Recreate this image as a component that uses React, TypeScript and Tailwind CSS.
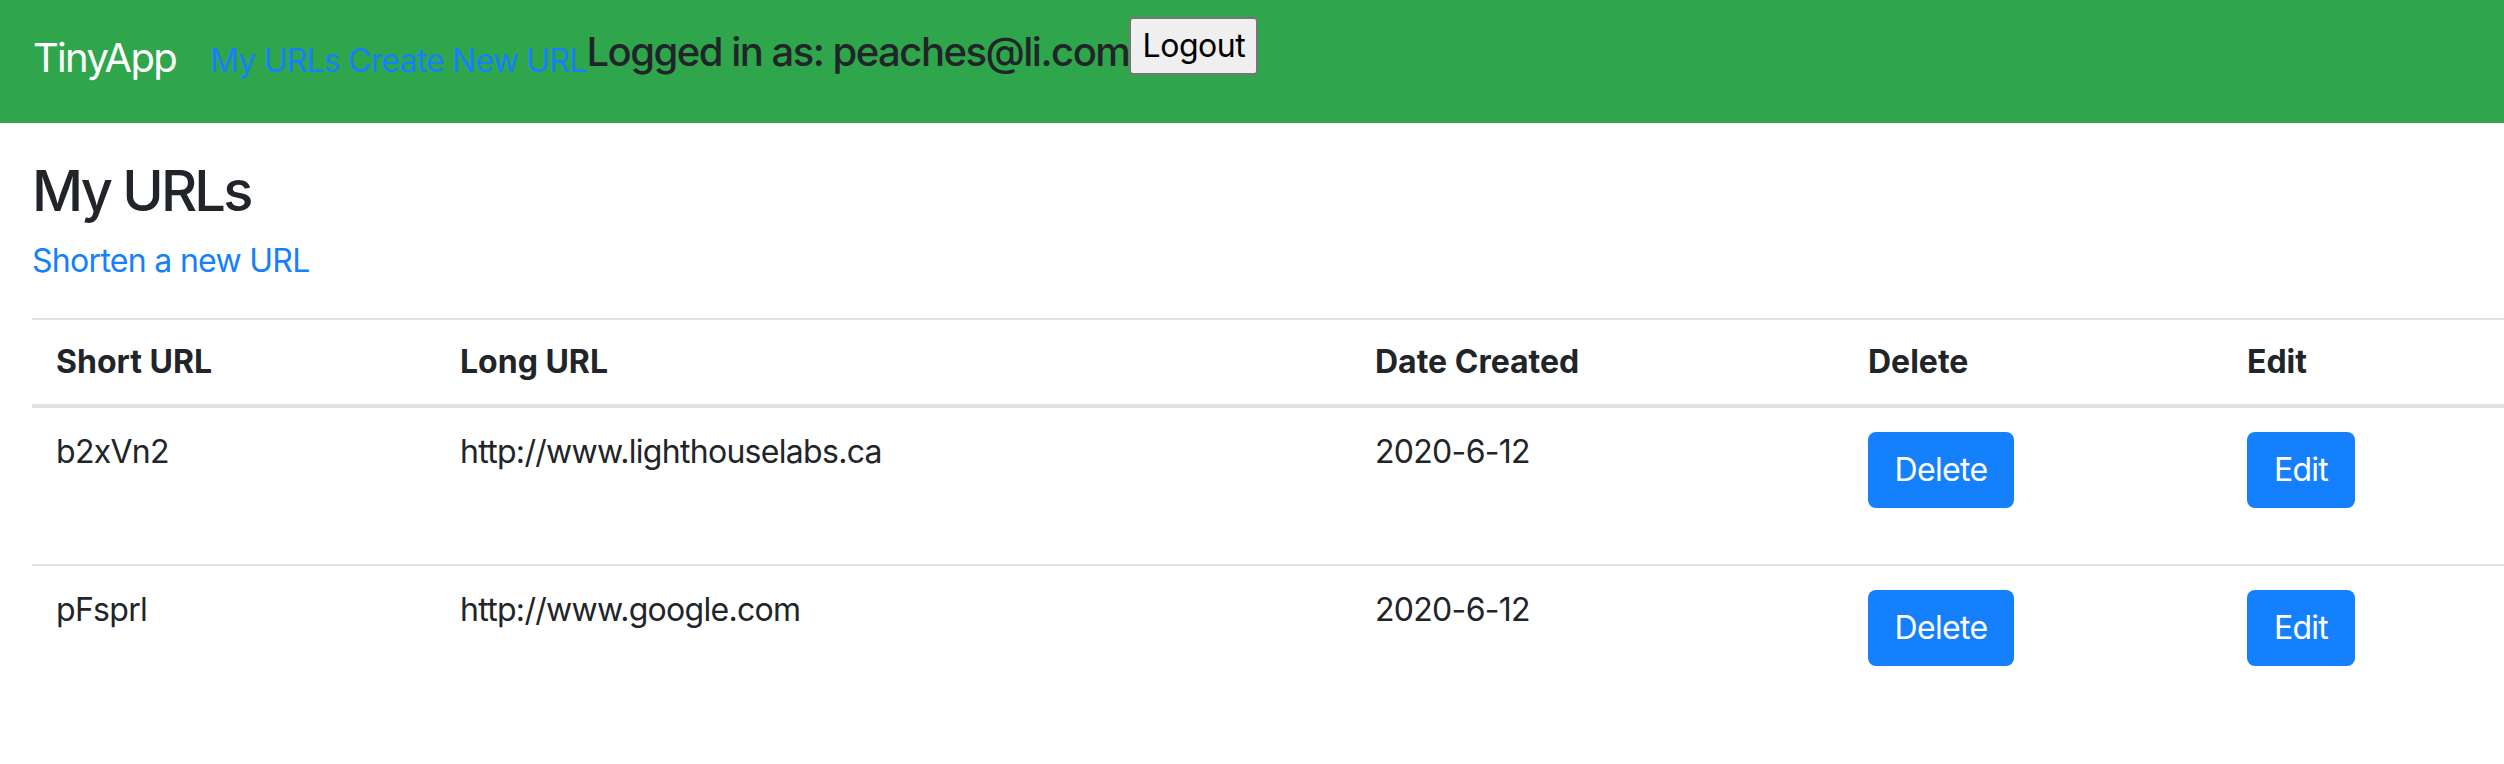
const urls = [
  { short: 'b2xVn2', long: 'http://www.lighthouselabs.ca', date: '2020-6-12' },
  { short: 'pFsprl', long: 'http://www.google.com', date: '2020-6-12' },
]

const Navbar = () => {
  return (
    <nav className="flex h-[123px] items-start bg-[#2fa64c] pl-[33px] whitespace-nowrap">
      <a href="/urls" className="mt-[28px] text-[40px] leading-[60px] tracking-[-1.7px] text-white">
        TinyApp
      </a>
      <div className="ml-[34px] mt-[37px] text-[32px] leading-[48px] tracking-[-0.8px] text-[#1580fb]">
        <a href="/urls">My URLs</a> <a href="/urls/new">Create New URL</a>
      </div>
      <h5 className="mt-[28px] text-[40px] font-medium leading-[48px] tracking-[-1.5px] text-[#212529]">
        Logged in as: peaches@li.com
      </h5>
      <form className="mt-[17px]" onSubmit={(e) => e.preventDefault()}>
        <button
          type="submit"
          className="flex h-[58px] w-[129px] items-center justify-center rounded-[4px] border-2 border-[#767676] bg-[#efefef] text-[32px] leading-[48px] tracking-[-0.5px] text-black"
        >
          Logout
        </button>
      </form>
    </nav>
  )
}

const App = () => {
  return (
    <div className="min-h-screen bg-white font-['Inter','Liberation_Sans',sans-serif] text-[#212529]">
      <Navbar />
      <main className="pl-[32px]">
        <h3 className="mt-[35px] text-[56px] font-medium leading-[67px] tracking-[-2.8px]">My URLs</h3>
        <div className="mt-[12px] text-[32px] leading-[48px] tracking-[-0.7px]">
          <a href="/urls/new" className="text-[#1580fb]">
            Shorten a new URL
          </a>
        </div>

        <table className="mt-[33px] w-[2472px] table-fixed border-separate border-spacing-0 text-left text-[32px] leading-[48px]">
          <colgroup>
            <col className="w-[404px]" />
            <col className="w-[915px]" />
            <col className="w-[493px]" />
            <col className="w-[379px]" />
            <col className="w-[281px]" />
          </colgroup>
          <thead>
            <tr>
              {['Short URL', 'Long URL', 'Date Created', 'Delete', 'Edit'].map((h) => (
                <th
                  key={h}
                  className="border-t-2 border-b-4 border-[#dee2e6] px-[24px] py-[18px] align-top font-bold"
                >
                  {h}
                </th>
              ))}
            </tr>
          </thead>
          <tbody className="tracking-[-0.7px]">
            {urls.map((url, i) => {
              const border = i > 0 ? 'border-t-2 border-[#dee2e6]' : ''
              return (
                <tr key={url.short}>
                  <td className={`${border} px-[24px] pt-[20px] align-top`}>{url.short}</td>
                  <td className={`${border} px-[24px] pt-[20px] align-top`}>{url.long}</td>
                  <td className={`${border} px-[24px] pt-[20px] align-top`}>{url.date}</td>
                  <td className={`${border} px-[24px] pt-[24px] pb-[56px] align-top`}>
                    <form onSubmit={(e) => e.preventDefault()}>
                      <button
                        type="submit"
                        className="flex h-[76px] w-[146px] items-center justify-center rounded-[8px] bg-[#1580fb] text-[32px] leading-[48px] text-white"
                      >
                        Delete
                      </button>
                    </form>
                  </td>
                  <td className={`${border} px-[24px] pt-[24px] pb-[56px] align-top`}>
                    <form onSubmit={(e) => e.preventDefault()}>
                      <button
                        type="submit"
                        className="flex h-[76px] w-[108px] items-center justify-center rounded-[8px] bg-[#1580fb] text-[32px] leading-[48px] text-white"
                      >
                        Edit
                      </button>
                    </form>
                  </td>
                </tr>
              )
            })}
          </tbody>
        </table>
      </main>
    </div>
  )
}

export default App
